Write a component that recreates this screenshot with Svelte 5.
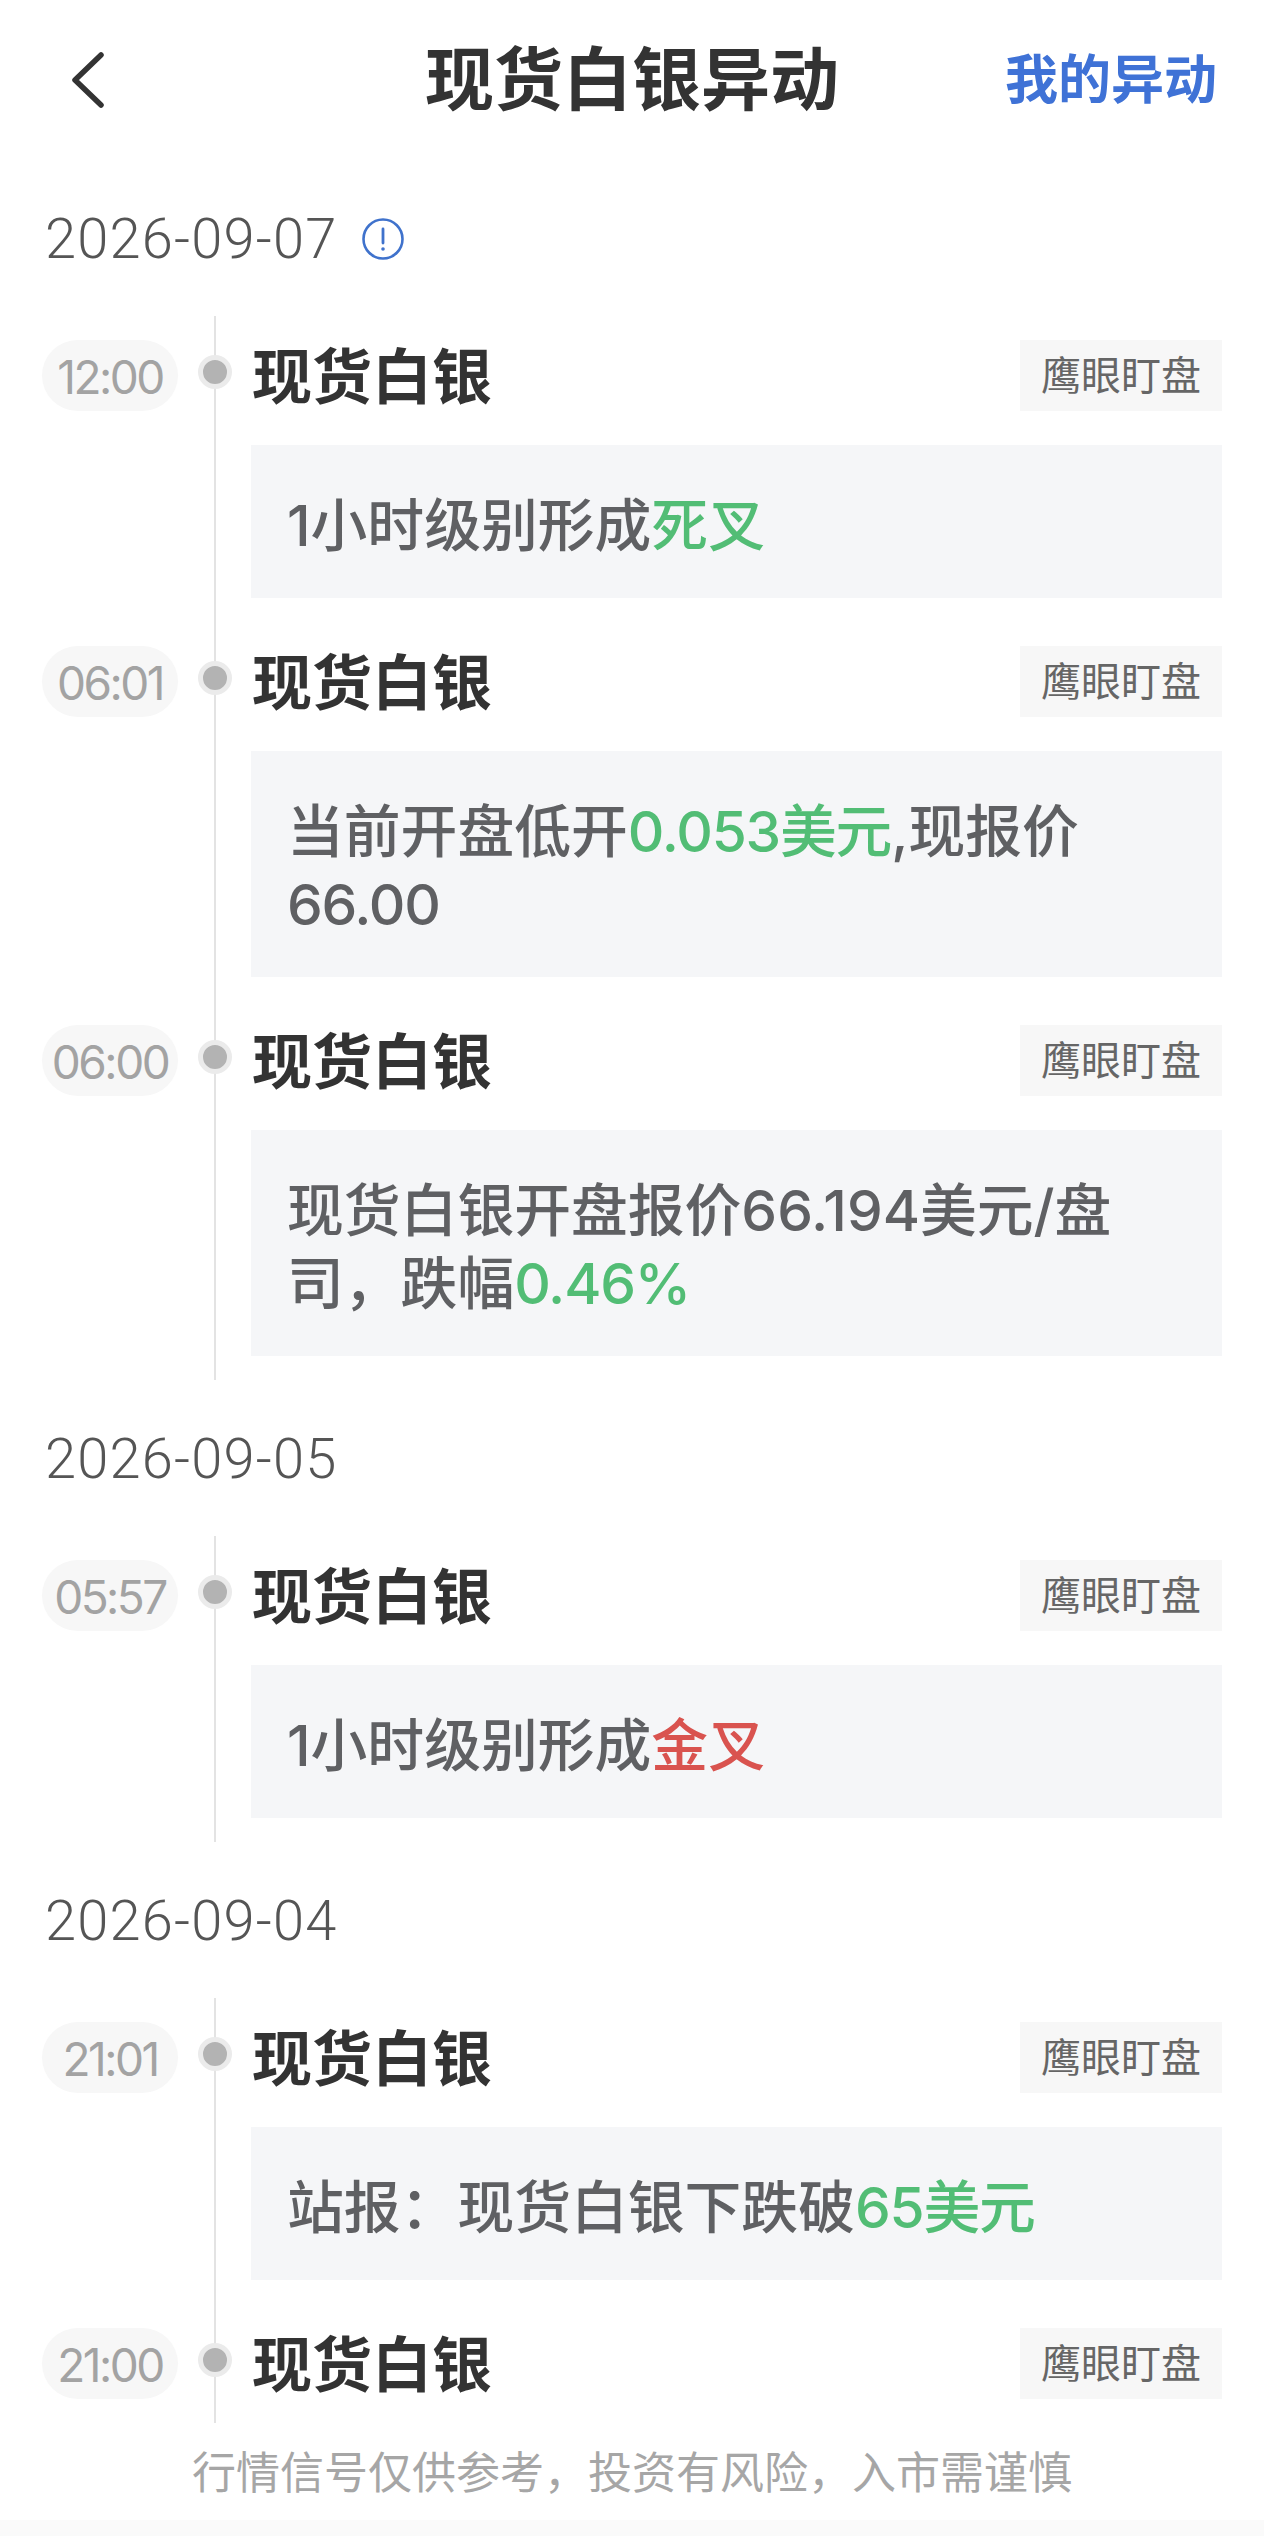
<script>
  const sections = [
    { date: '2026-09-07', info: true, items: [
      { time: '12:00', parts: [['1小时级别形成'], ['死叉', 'down']] },
      { time: '06:01', parts: [['当前开盘低开'], ['0.053美元', 'down num'], [',现报价 '], ['66.00', 'num']] },
      { time: '06:00', parts: [['现货白银开盘报价66.194美元/盘'], ['司，跌幅'], ['0.46%', 'down num']] }
    ]},
    { date: '2026-09-05', items: [
      { time: '05:57', parts: [['1小时级别形成'], ['金叉', 'up']] }
    ]},
    { date: '2026-09-04', items: [
      { time: '21:01', parts: [['站报：现货白银下跌破'], ['65美元', 'down num']] },
      { time: '21:00' }
    ]}
  ];
</script>

<div class="page">
  <header class="bar">
    <svg class="back" viewBox="0 0 32 56" width="32" height="56" aria-label="返回">
      <path d="M29 3 L3 28 L29 53" fill="none" stroke="#333" stroke-width="5.5" stroke-linecap="round" stroke-linejoin="round" />
    </svg>
    <h1>现货白银异动</h1>
    <a class="mine" href="#mine">我的异动</a>
  </header>

  <main class="feed">
    {#each sections as s}
      <div class="date">
        <span class="day">{s.date}</span>
        {#if s.info}
          <svg class="info" viewBox="0 0 42 42" width="42" height="42">
            <circle cx="21" cy="21" r="19.5" fill="none" stroke="#3f72cc" stroke-width="2.6" />
            <path d="M21 11 V25" stroke="#3f72cc" stroke-width="2.8" stroke-linecap="round" />
            <circle cx="21" cy="31" r="1.8" fill="#3f72cc" />
          </svg>
        {/if}
      </div>
      {#each s.items as it}
        <article class="item">
          <div class="time">{it.time}</div>
          <div class="rail"><i class="dot"></i></div>
          <div class="body">
            <div class="head">
              <h2>现货白银</h2>
              <span class="tag">鹰眼盯盘</span>
            </div>
            {#if it.parts}
              <p class="card">
                {#each it.parts as [t, c]}<span class={c}>{t}</span>{/each}
              </p>
            {/if}
          </div>
        </article>
      {/each}
    {/each}
  </main>

  <footer class="note">行情信号仅供参考，投资有风险，入市需谨慎</footer>
  <div class="strip"></div>
</div>

<style>
  :global(body) {
    margin: 0;
    background: #fff;
  }
  .page {
    width: 1264px;
    height: 2536px;
    overflow: hidden;
    display: flex;
    flex-direction: column;
    font-family: "Inter", "Noto Sans CJK SC", sans-serif;
    color: #333;
  }
  .bar {
    height: 160px;
    flex: none;
    display: grid;
    grid-template-columns: 1fr auto 1fr;
    align-items: center;
    padding: 0 47px;
    box-sizing: border-box;
  }
  .back {
    display: block;
    margin-left: 25px;
  }
  h1 {
    margin: 0;
    font-size: 69px;
    font-weight: 700;
    line-height: 1;
    color: #333;
  }
  .mine {
    justify-self: end;
    font-size: 53px;
    font-weight: 700;
    color: #3f72d6;
    text-decoration: none;
    line-height: 1;
  }
  .feed {
    flex: 1;
  }
  .date {
    height: 156px;
    padding-left: 45px;
    display: flex;
    align-items: center;
    gap: 24px;
    font-family: "Roboto", "Noto Sans CJK SC", sans-serif;
    font-weight: 300;
    font-size: 56px;
    letter-spacing: 1.2px;
    color: #555;
  }
  .day {
    padding-top: 2px;
  }
  .info {
    display: block;
    margin-top: 2px;
  }
  .item {
    display: grid;
    grid-template-columns: 136px 2px 1fr;
    column-gap: 36px;
    padding: 0 42px;
    align-items: stretch;
  }
  .item > * {
    min-width: 0;
  }
  .time {
    height: 71px;
    margin-top: 24px;
    border-radius: 36px;
    background: #f7f7f7;
    color: #a3a3a3;
    font-size: 46px;
    letter-spacing: -2.5px;
    line-height: 75px;
    text-align: center;
  }
  .rail {
    background: #e3e3e3;
    position: relative;
    width: 2px;
  }
  .dot {
    position: absolute;
    left: -16px;
    top: 39px;
    width: 34px;
    height: 34px;
    box-sizing: border-box;
    border-radius: 50%;
    background: #b3b3b3;
    border: 5px solid #ebebeb;
  }
  .body {
    padding: 24px 0;
    margin-left: -1px;
  }
  .head {
    height: 71px;
    display: flex;
    justify-content: space-between;
    align-items: center;
  }
  h2 {
    margin: 0;
    padding: 2px 0 0 1px;
    font-size: 60px;
    font-weight: 700;
    line-height: 1;
    color: #333;
  }
  .tag {
    width: 202px;
    height: 71px;
    background: #f7f7f7;
    color: #666;
    font-size: 40px;
    line-height: 71px;
    text-align: center;
    font-weight: 400;
  }
  .card {
    margin: 34px 0 0;
    padding: 44px 36px 36px;
    background: #f5f6f8;
    font-size: 56.8px;
    font-weight: 500;
    line-height: 73px;
    color: #5f6063;
  }
  .num {
    letter-spacing: -1.2px;
  }
  .down {
    color: #52bd75;
  }
  .up {
    color: #d9534f;
  }
  .note {
    flex: none;
    height: 95px;
    line-height: 96px;
    text-align: center;
    font-size: 44px;
    font-weight: 400;
    color: #a6a6a6;
  }
  .strip {
    flex: none;
    height: 16px;
    background: #fafafa;
  }
</style>
